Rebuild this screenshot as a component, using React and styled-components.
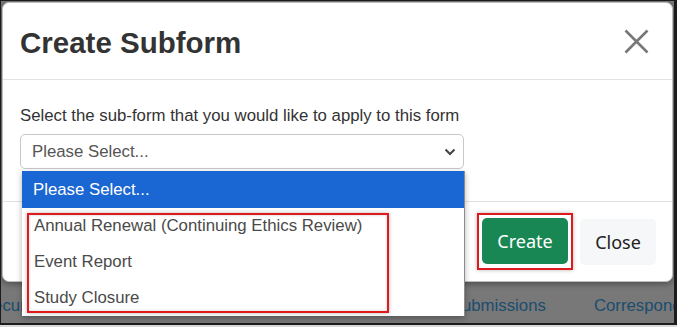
import React from 'react';
import styled, { createGlobalStyle } from 'styled-components';

const GlobalStyle = createGlobalStyle`
  html, body {
    margin: 0;
    padding: 0;
    background: #d9d9d9;
  }
  * {
    box-sizing: border-box;
  }
`;

const options = ['Annual Renewal (Continuing Ethics Review)', 'Event Report', 'Study Closure'];

const App = () => (
  <>
    <GlobalStyle />
    <Frame>
      <Modal>
        <Header>
          <Title>Create Subform</Title>
          <CloseIcon aria-label="Close">
            <svg width="25" height="25" viewBox="0 0 25 25">
              <path d="M1.5 1.5 L23.5 23.5 M23.5 1.5 L1.5 23.5" stroke="#777" strokeWidth="2.6" fill="none" />
            </svg>
          </CloseIcon>
        </Header>
        <Body>
          <Label>Select the sub-form that you would like to apply to this form</Label>
          <SelectWrap>
            <SelectBox>
              <span>Please Select...</span>
              <svg width="12" height="8" viewBox="0 0 12 8">
                <path d="M1.5 1.5 L6 6 L10.5 1.5" stroke="#444" strokeWidth="2" fill="none" />
              </svg>
            </SelectBox>
            <OptionList>
              <Option $active>Please Select...</Option>
              {options.map((o) => (
                <Option key={o}>{o}</Option>
              ))}
              <OptionsMark />
            </OptionList>
          </SelectWrap>
        </Body>
        <Footer>
          <Marked>
            <CreateButton>Create</CreateButton>
          </Marked>
          <CloseButton>Close</CloseButton>
        </Footer>
      </Modal>
      <NavRow>
        <NavLink $offset={-21}>Recur</NavLink>
        <NavLink $offset={425}>Submissions</NavLink>
        <NavLink $offset={48}>Correspondence</NavLink>
      </NavRow>
    </Frame>
  </>
);

export default App;

const Frame = styled.div`
  width: 677px;
  height: 325px;
  padding: 1px 0 0 1px;
  background: #787878;
  border-style: solid;
  border-color: #1c1c1c;
  border-width: 1px 3px 2px 1px;
  overflow: hidden;
  display: flex;
  flex-direction: column;
  font-family: 'Liberation Sans', Arial, sans-serif;
`;

const Modal = styled.div`
  width: 671px;
  height: 280px;
  background: #fff;
  border: 1px solid #bdbdbd;
  border-radius: 7px;
  box-shadow: 0 2px 6px rgba(0, 0, 0, 0.35);
  display: flex;
  flex-direction: column;
  position: relative;
  z-index: 1;
`;

const Header = styled.div`
  height: 77px;
  flex: none;
  border-bottom: 1px solid #e2e2e2;
  display: flex;
  align-items: center;
  justify-content: space-between;
  padding: 3px 23px 0 17px;
`;

const Title = styled.h2`
  margin: 0;
  font-size: 29.5px;
  font-weight: 700;
  line-height: 36px;
  color: #333;
`;

const CloseIcon = styled.div`
  display: flex;
  margin-top: -3px;
`;

const Body = styled.div`
  height: 121px;
  flex: none;
  padding: 24px 0 0 17px;
`;

const Label = styled.div`
  font-size: 16.8px;
  line-height: 24px;
  color: #333;
  margin-bottom: 6px;
`;

const SelectWrap = styled.div`
  position: relative;
  width: 444px;
`;

const SelectBox = styled.div`
  height: 35px;
  border: 1px solid #c8c8c8;
  border-radius: 5px;
  display: flex;
  align-items: center;
  justify-content: space-between;
  padding: 0 7px 0 11px;
  font-size: 16.8px;
  color: #555;
`;

const OptionList = styled.div`
  position: absolute;
  top: 37px;
  left: 2px;
  width: 443px;
  height: 145px;
  background: #fff;
  border: 1px solid #8c8c8c;
  border-top: none;
  border-left: none;
  box-shadow: 0 2px 6px rgba(0, 0, 0, 0.3);
  z-index: 5;
`;

const Option = styled.div`
  height: ${(p) => (p.$active ? '37px' : '36px')};
  display: flex;
  align-items: center;
  padding-left: ${(p) => (p.$active ? '11px' : '12px')};
  font-size: 16.8px;
  color: ${(p) => (p.$active ? '#fff' : '#4a4a4a')};
  background: ${(p) => (p.$active ? '#1a66d2' : '#fff')};
  white-space: nowrap;
`;

const OptionsMark = styled.div`
  position: absolute;
  left: 5px;
  top: 42px;
  width: 362px;
  height: 100px;
  border: 2px solid #e0191c;
  box-shadow: 0 0 4px rgba(0, 0, 0, 0.3), inset 0 0 3px rgba(0, 0, 0, 0.2);
  pointer-events: none;
`;

const Footer = styled.div`
  flex: 1;
  border-top: 1px solid #e2e2e2;
  display: flex;
  align-items: center;
  justify-content: flex-end;
  gap: 7px;
  padding-right: 16px;
  font-family: 'Noto Sans', 'Open Sans', sans-serif;
`;

const Marked = styled.div`
  border: 2px solid #e0191c;
  padding: 3px 3px 4px;
  box-shadow: 0 0 4px rgba(0, 0, 0, 0.3);
`;

const BaseButton = styled.button`
  height: 46px;
  border: none;
  border-radius: 5px;
  font-family: 'Noto Sans', 'Open Sans', sans-serif;
  font-size: 18px;
  padding: 0;
`;

const CreateButton = styled(BaseButton)`
  width: 86px;
  background: #198754;
  color: #fff;
`;

const CloseButton = styled(BaseButton)`
  width: 76px;
  background: #f6f7f8;
  color: #222;
`;

const NavRow = styled.div`
  display: flex;
  margin-top: 14px;
  white-space: nowrap;
`;

const NavLink = styled.span`
  margin-left: ${(p) => p.$offset}px;
  font-size: 16.8px;
  color: #1a4d6e;
`;
